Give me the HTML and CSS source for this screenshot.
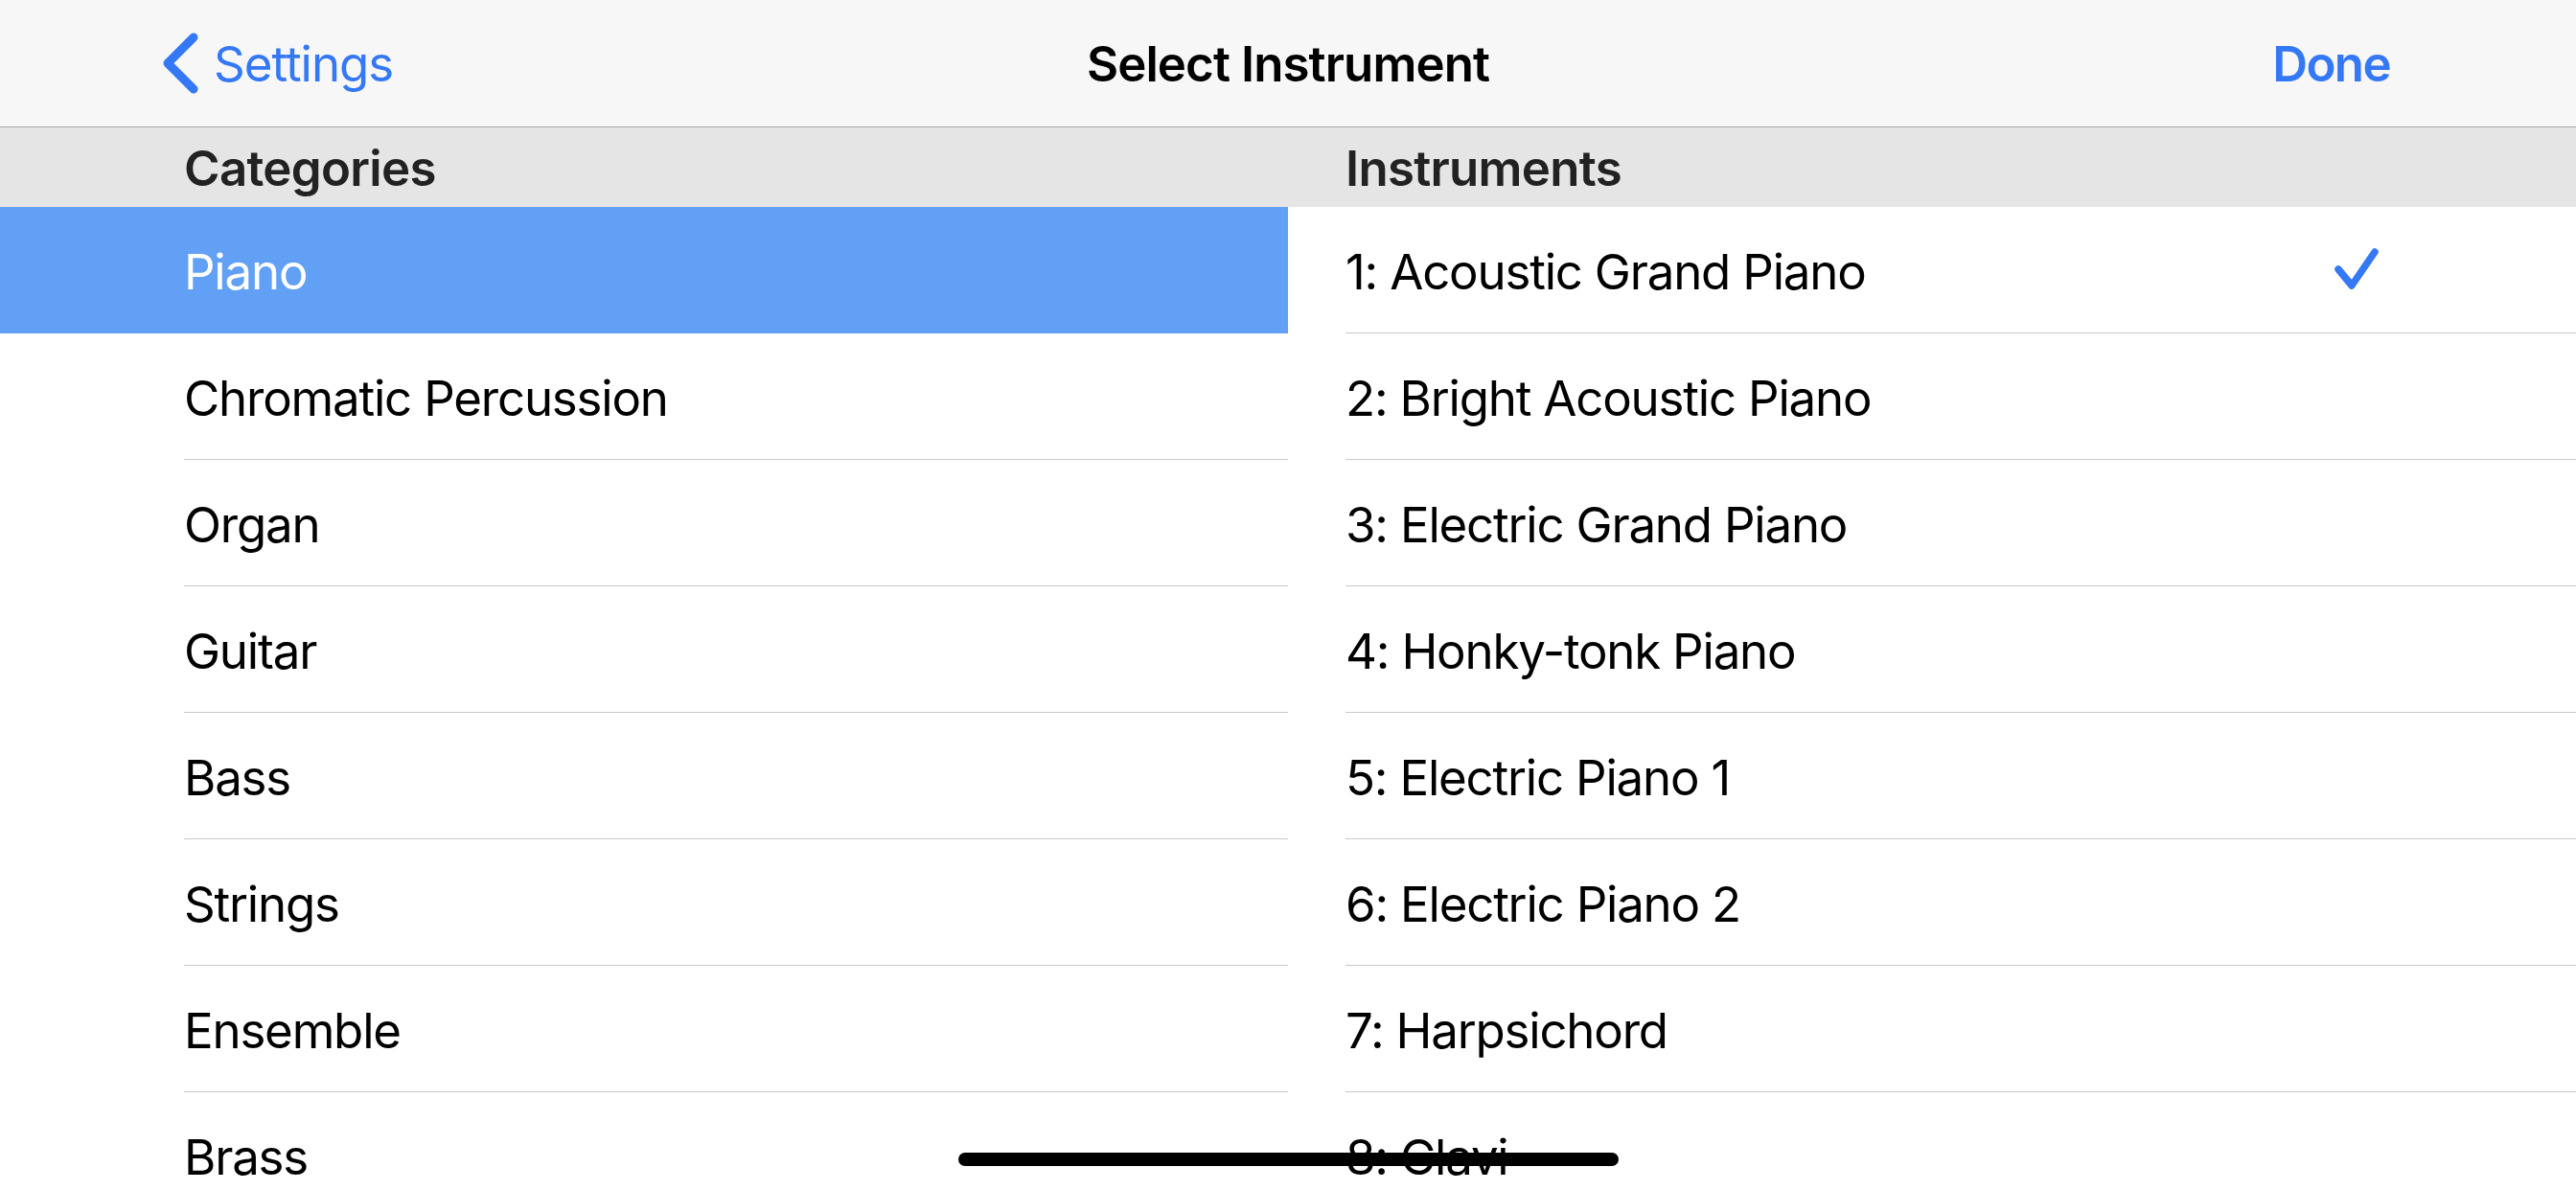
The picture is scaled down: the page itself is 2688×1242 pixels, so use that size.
FILE: index.html
```html
<!DOCTYPE html>
<html lang="en">
<head>
<meta charset="utf-8">
<title>Select Instrument</title>
<link rel="stylesheet" href="styles.css">
</head>
<body>
<div class="screen">
  <header class="navbar">
    <div class="nav-left">
      <a class="back-button" href="#">
        <svg class="chevron" width="42" height="68" viewBox="0 0 42 68" aria-hidden="true">
          <path d="M34 6 L7 33 L34 60" fill="none" stroke="#3478f6" stroke-width="9" stroke-linecap="round" stroke-linejoin="round"/>
        </svg>
        <span class="back-label">Settings</span>
      </a>
    </div>
    <h1 class="nav-title">Select Instrument</h1>
    <div class="nav-right">
      <a class="done-button" href="#">Done</a>
    </div>
  </header>

  <main class="split">
    <section class="pane pane-left">
      <div class="section-header">Categories</div>
      <ul class="list">
        <li class="row selected"><span class="row-label">Piano</span></li>
        <li class="row"><span class="row-label">Chromatic Percussion</span></li>
        <li class="row"><span class="row-label">Organ</span></li>
        <li class="row"><span class="row-label">Guitar</span></li>
        <li class="row"><span class="row-label">Bass</span></li>
        <li class="row"><span class="row-label">Strings</span></li>
        <li class="row"><span class="row-label">Ensemble</span></li>
        <li class="row"><span class="row-label">Brass</span></li>
      </ul>
    </section>

    <section class="pane pane-right">
      <div class="section-header">Instruments</div>
      <ul class="list">
        <li class="row checked">
          <span class="row-label">1: Acoustic Grand Piano</span>
          <svg class="check" width="52" height="52" viewBox="0 0 52 52" aria-hidden="true">
            <path d="M6 25 L20 42 L44 7" fill="none" stroke="#3478f6" stroke-width="7.5" stroke-linecap="round" stroke-linejoin="round"/>
          </svg>
        </li>
        <li class="row"><span class="row-label">2: Bright Acoustic Piano</span></li>
        <li class="row"><span class="row-label">3: Electric Grand Piano</span></li>
        <li class="row"><span class="row-label">4: Honky-tonk Piano</span></li>
        <li class="row"><span class="row-label">5: Electric Piano 1</span></li>
        <li class="row"><span class="row-label">6: Electric Piano 2</span></li>
        <li class="row"><span class="row-label">7: Harpsichord</span></li>
        <li class="row"><span class="row-label">8: Clavi</span></li>
      </ul>
    </section>
  </main>

  <div class="home-indicator"></div>
</div>
</body>
</html>
```

FILE: styles.css
```css
* {
  box-sizing: border-box;
}

html, body {
  margin: 0;
  padding: 0;
  background: #ffffff;
}

body {
  font-family: "Inter", "Noto Sans", "Liberation Sans", sans-serif;
  color: #000000;
  overflow: hidden;
}

.screen {
  position: relative;
  width: 2688px;
  height: 1242px;
  overflow: hidden;
  background: #ffffff;
}

/* ---------- Navigation bar ---------- */
.navbar {
  height: 133px;
  background: #f7f7f7;
  border-bottom: 1px solid #a6a6a6;
  display: grid;
  grid-template-columns: 1fr auto 1fr;
  align-items: center;
}

.nav-left {
  display: flex;
  align-items: center;
  padding-left: 168px;
}

.back-button {
  display: flex;
  align-items: center;
  gap: 13px;
  color: #3478f6;
  text-decoration: none;
}

.chevron {
  display: block;
  margin-top: 1px;
}

.back-label {
  font-size: 51px;
  font-weight: 400;
  letter-spacing: -1px;
  line-height: 1;
}

.nav-title {
  margin: 0;
  font-size: 51px;
  font-weight: 600;
  letter-spacing: -0.9px;
  line-height: 1;
  color: #000000;
}

.nav-right {
  display: flex;
  justify-content: flex-end;
  padding-right: 194px;
}

.done-button {
  color: #3478f6;
  text-decoration: none;
  font-size: 51px;
  font-weight: 600;
  letter-spacing: -1.6px;
  line-height: 1;
}

/* ---------- Split view ---------- */
.split {
  display: grid;
  grid-template-columns: 1344px 1344px;
}

.pane {
  display: flex;
  flex-direction: column;
}

.section-header {
  height: 83px;
  background: #e5e5e5;
  display: flex;
  align-items: center;
  font-size: 51px;
  font-weight: 600;
  letter-spacing: -0.7px;
  color: #222222;
  line-height: 1;
  padding-top: 2px;
}

.pane-left .section-header {
  padding-left: 192px;
}

.pane-right .section-header {
  padding-left: 60px;
}

.list {
  list-style: none;
  margin: 0;
  padding: 0;
}

.row {
  height: 132px;
  display: flex;
  align-items: center;
  justify-content: space-between;
  border-bottom: 1px solid #c8c7cc;
  font-size: 51px;
  font-weight: 400;
  letter-spacing: -1.2px;
  line-height: 1;
}

.pane-left .row {
  margin-left: 192px;
}

.pane-right .row {
  margin-left: 60px;
  padding-right: 202px;
}

.row-label {
  padding-top: 4px;
}

.pane-left .row.selected {
  margin-left: 0;
  padding-left: 192px;
  background: #62a0f6;
  border-bottom-color: #62a0f6;
  color: #ffffff;
}

.check {
  display: block;
}

/* ---------- Home indicator overlay ---------- */
.home-indicator {
  position: absolute;
  left: 1000px;
  top: 1203px;
  width: 689px;
  height: 14px;
  border-radius: 7px;
  background: #000000;
}
```
